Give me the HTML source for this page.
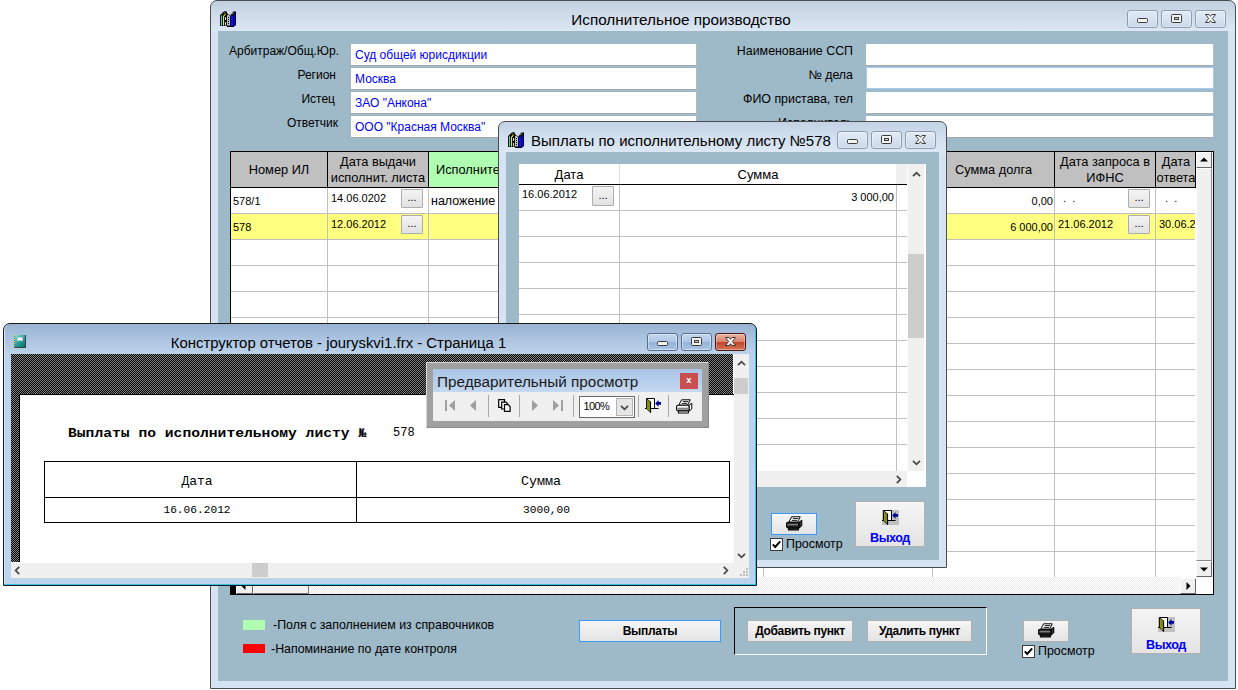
<!DOCTYPE html><html lang="ru"><head><meta charset="utf-8"><title>Исполнительное производство</title><style>
html,body{margin:0;padding:0}
body{width:1238px;height:690px;overflow:hidden;background:#fff;position:relative;font-family:"Liberation Sans",sans-serif;font-size:12px;color:#000}
div,span,svg{position:absolute;box-sizing:border-box;white-space:nowrap}
.win{border:1px solid #4a4c50;border-radius:7px 7px 0 0}
.cl{background:#9eb9c8}
.lbl{text-align:right;font-size:12px;line-height:14px}
.fld{background:#fff;border-bottom:1px solid #a9a9a9;border-right:1px solid #b4bcc0;color:#0000ff;font-size:12px;line-height:21px;padding-left:4px;padding-top:1px}
.hd{background:#c0c0c0;text-align:center;font-size:13px;line-height:15px}
.g{background:#c0c0c0}
.bk{background:#000}
.w{background:#fff}
.btn{background:linear-gradient(#f5f5f5,#e4e4e4);border:1px solid #b0b0b0;text-align:center}
.b{font-weight:bold}
.cb{background:#fff;border:1px solid #444}
.wb{border:1px solid #8d9db0;border-radius:3px;background:linear-gradient(#e3ecf7,#c9d8ea)}
.tt{font-size:16px;line-height:20px}
.t{font-size:11px;line-height:14px}
.t2{font-size:12.4px;line-height:14px}
.eb{background:linear-gradient(#f4f4f4,#e2e2e2);border:1px solid #adadad;border-radius:1px;font-size:11px;line-height:14px;text-align:center}
.sb{background:#f0f0f0}
</style></head><body>
<div class="win" style="left:210px;top:0px;width:1026px;height:689px;background:linear-gradient(#c1cfde 0,#cfdbe9 14px,#dce7f3 30px,#d6e3f2 31px)"></div>
<svg style="left:220px;top:11px" width="16" height="16" viewBox="0 0 16 16"><path d="M0 4.2L3.2 1 4.5.3h2L7 2l3 2.2V16H7v-1H0z" fill="#000"/><path d="M10 5l3.2-4.5H16V14l-2.5 2H10z" fill="#000"/><rect x="1" y="4.3" width="1.1" height="10.2" fill="#00f0f0"/><path d="M3 5.2L5.2 2.2l.8.6L4.1 5.6V14.5H3z" fill="#f8f000"/><rect x="5.1" y="6" width="1" height="3" fill="#e8e8e8"/><rect x="5.1" y="11" width="1" height="3.5" fill="#e8e8e8"/><path d="M7 4.5l1.3-1L10 5v9.5H7z" fill="#c0c0c0"/><path d="M8 6.5h1M8 8.5h1M8 10.5h1M8 12.5h1" stroke="#000" stroke-width="1"/><rect x="10.8" y="4.6" width="2.6" height="10.6" fill="#1010f8"/><path d="M14.1 3.2l1-1v11.6l-1 1z" fill="#1010f8"/><path d="M12.3 3.2l1.4-1.8" stroke="#e8d8c8" stroke-width=".8"/><path d="M3.6 2.4l1-1M7.6 2.8l.9.8" stroke="#e0e0e0" stroke-width=".7"/></svg>
<div class="tt" style="left:211px;top:10px;width:940px;height:21px;text-align:center;font-size:15.3px">Исполнительное производство</div>
<div class="wb" style="left:1127px;top:10px;width:31px;height:18px;box-shadow:inset 0 0 0 1px rgba(255,255,255,.35)">
<div style="left:9px;top:7px;width:11px;height:5px;border:1px solid #3c3c3c;border-radius:1.5px;background:#f2f2f0"></div>
</div>
<div class="wb" style="left:1161px;top:10px;width:31px;height:18px;box-shadow:inset 0 0 0 1px rgba(255,255,255,.35)">
<div style="left:9px;top:3px;width:11px;height:9px;border:1px solid #3c3c3c;border-radius:1.5px;background:#f2f2f0"></div>
<div style="left:12px;top:6px;width:5px;height:3px;border:1px solid #3c3c3c;background:#c8d6e6"></div>
</div>
<div class="wb" style="left:1195px;top:10px;width:31px;height:18px;box-shadow:inset 0 0 0 1px rgba(255,255,255,.35)">
<svg style="left:9px;top:3px" width="11" height="9" viewBox="0 0 11 9"><path d="M.5 .5H4L5.5 2.3 7 .5h3.500L7.400 4.500 10.500 8.500H7L5.500 6.700 4 8.500H.500L3.600 4.500z" fill="#f4f4f2" stroke="#3c3c3c" stroke-width="1" stroke-linejoin="round"/></svg>
</div>
<div class="cl" style="left:218px;top:31px;width:1010px;height:650px;"></div>
<div class="lbl" style="left:218px;top:44px;width:121px;height:16px;">Арбитраж/Общ.Юр.</div>
<div class="lbl" style="left:218px;top:68px;width:118px;height:16px;">Регион</div>
<div class="lbl" style="left:218px;top:92px;width:117px;height:16px;">Истец</div>
<div class="lbl" style="left:218px;top:116px;width:120px;height:16px;">Ответчик</div>
<div class="fld" style="left:351px;top:44px;width:346px;height:22px;">Суд общей юрисдикции</div>
<div class="fld" style="left:351px;top:68px;width:346px;height:22px;">Москва</div>
<div class="fld" style="left:351px;top:92px;width:346px;height:22px;">ЗАО "Анкона"</div>
<div class="fld" style="left:351px;top:116px;width:346px;height:22px;">ООО "Красная Москва"</div>
<div class="lbl" style="left:700px;top:44px;width:153px;height:16px;font-size:12.4px">Наименование ССП</div>
<div class="lbl" style="left:700px;top:68px;width:153px;height:16px;font-size:12.4px">№ дела</div>
<div class="lbl" style="left:700px;top:92px;width:153px;height:16px;font-size:12.4px">ФИО пристава, тел</div>
<div class="lbl" style="left:700px;top:116px;width:153px;height:16px;font-size:12.4px">Исполнитель</div>
<div class="fld" style="left:866px;top:44px;width:348px;height:22px;"></div>
<div class="fld" style="left:866px;top:68px;width:348px;height:22px;box-shadow:inset 0 0 0 1px #a6c9f0;border:0;height:22px;top:67px"></div>
<div class="fld" style="left:866px;top:92px;width:348px;height:22px;"></div>
<div class="fld" style="left:866px;top:116px;width:348px;height:22px;"></div>
<div class="bk" style="left:230px;top:151px;width:984px;height:444px;"></div>
<div class="w" style="left:231px;top:152px;width:982px;height:442px;"></div>
<div class="hd" style="left:231px;top:152px;width:964px;height:35px;"></div>
<div class="bk" style="left:231px;top:187px;width:965px;height:1px;"></div>
<div class="bk" style="left:1195px;top:152px;width:1px;height:36px;"></div>
<div class="" style="left:231px;top:214px;width:964px;height:25px;background:#ffff80"></div>
<div class="g" style="left:231px;top:213px;width:964px;height:1px;"></div>
<div class="g" style="left:231px;top:239px;width:964px;height:1px;"></div>
<div class="g" style="left:231px;top:265px;width:964px;height:1px;"></div>
<div class="g" style="left:231px;top:291px;width:964px;height:1px;"></div>
<div class="g" style="left:231px;top:317px;width:964px;height:1px;"></div>
<div class="g" style="left:231px;top:343px;width:964px;height:1px;"></div>
<div class="g" style="left:231px;top:369px;width:964px;height:1px;"></div>
<div class="g" style="left:231px;top:395px;width:964px;height:1px;"></div>
<div class="g" style="left:231px;top:421px;width:964px;height:1px;"></div>
<div class="g" style="left:231px;top:447px;width:964px;height:1px;"></div>
<div class="g" style="left:231px;top:473px;width:964px;height:1px;"></div>
<div class="g" style="left:231px;top:499px;width:964px;height:1px;"></div>
<div class="g" style="left:231px;top:525px;width:964px;height:1px;"></div>
<div class="g" style="left:231px;top:551px;width:964px;height:1px;"></div>
<div class="g" style="left:327px;top:188px;width:1px;height:389px;"></div>
<div class="bk" style="left:327px;top:152px;width:1px;height:36px;"></div>
<div class="g" style="left:428px;top:188px;width:1px;height:389px;"></div>
<div class="bk" style="left:428px;top:152px;width:1px;height:36px;"></div>
<div class="g" style="left:763px;top:188px;width:1px;height:389px;"></div>
<div class="bk" style="left:763px;top:152px;width:1px;height:36px;"></div>
<div class="g" style="left:932px;top:188px;width:1px;height:389px;"></div>
<div class="bk" style="left:932px;top:152px;width:1px;height:36px;"></div>
<div class="g" style="left:1054px;top:188px;width:1px;height:389px;"></div>
<div class="bk" style="left:1054px;top:152px;width:1px;height:36px;"></div>
<div class="g" style="left:1155px;top:188px;width:1px;height:389px;"></div>
<div class="bk" style="left:1155px;top:152px;width:1px;height:36px;"></div>
<div class="" style="left:428px;top:152px;width:335px;height:35px;background:#b0ffb0"></div>
<div class="bk" style="left:428px;top:152px;width:1px;height:36px;"></div>
<div class="" style="left:231px;top:162px;width:96px;height:16px;text-align:center;font-size:12.8px;line-height:16px">Номер ИЛ</div>
<div class="" style="left:328px;top:154px;width:100px;height:32px;text-align:center;font-size:12.8px;line-height:16px;white-space:normal">Дата выдачи<br>исполнит. листа</div>
<div class="" style="left:436px;top:162px;width:264px;height:16px;font-size:12.8px;line-height:16px">Исполнительный документ</div>
<div class="" style="left:933px;top:162px;width:121px;height:16px;text-align:center;font-size:12.8px;line-height:16px">Сумма долга</div>
<div class="" style="left:1055px;top:154px;width:100px;height:32px;text-align:center;font-size:12.8px;line-height:16px;white-space:normal">Дата запроса в<br>ИФНС</div>
<div class="" style="left:1156px;top:152px;width:39px;height:35px;overflow:hidden"></div>
<div class="" style="left:1156px;top:154px;width:40px;height:32px;text-align:center;font-size:12.8px;line-height:16px;white-space:normal;overflow:hidden">Дата<br>ответа</div>
<div class="t" style="left:233px;top:194px;width:87px;height:14px;">578/1</div>
<div class="t" style="left:233px;top:220px;width:87px;height:14px;">578</div>
<div class="t" style="left:331px;top:191px;width:69px;height:14px;">14.06.0202</div>
<div class="t" style="left:331px;top:217px;width:69px;height:14px;">12.06.2012</div>
<div class="eb" style="left:401px;top:189px;width:22px;height:19px;line-height:15px">...</div>
<div class="eb" style="left:401px;top:215px;width:22px;height:19px;line-height:15px">...</div>
<div class="" style="left:431px;top:193px;width:67px;height:16px;font-size:12.5px;line-height:16px">наложение</div>
<div class="" style="left:960px;top:193px;width:93px;height:16px;font-size:11px;line-height:16px;text-align:right">0,00</div>
<div class="" style="left:960px;top:219px;width:93px;height:16px;font-size:11px;line-height:16px;text-align:right">6 000,00</div>
<div class="t" style="left:1063px;top:191px;width:57px;height:14px;">.&nbsp;&nbsp;.</div>
<div class="t" style="left:1058px;top:217px;width:72px;height:14px;">21.06.2012</div>
<div class="eb" style="left:1128px;top:189px;width:22px;height:19px;line-height:15px">...</div>
<div class="eb" style="left:1128px;top:215px;width:22px;height:19px;line-height:15px">...</div>
<div class="t" style="left:1165px;top:191px;width:30px;height:14px;">.&nbsp;&nbsp;.</div>
<div class="t" style="left:1159px;top:217px;width:36px;height:14px;overflow:hidden">30.06.2012</div>
<div class="" style="left:1196px;top:152px;width:17px;height:425px;background:#f6f6f6"></div>
<div class="" style="left:1196px;top:152px;width:16px;height:16px;background:#f0f0f0;border:1px solid #fff;border-right-color:#666;border-bottom-color:#666"></div>
<svg style="left:1200px;top:157px" width="8" height="5"><path d="M0 4.5L4 .5 8 4.5z" fill="#000"/></svg>
<div class="" style="left:1196px;top:168px;width:16px;height:393px;background:#f0f0f0;border:1px solid #fff;border-right-color:#888;border-bottom-color:#888"></div>
<div class="" style="left:1196px;top:561px;width:16px;height:16px;background:#f0f0f0;border:1px solid #fff;border-right-color:#666;border-bottom-color:#666"></div>
<svg style="left:1200px;top:567px" width="8" height="5"><path d="M0 .5L4 4.5 8 .5z" fill="#000"/></svg>
<div class="" style="left:231px;top:577px;width:982px;height:17px;background:#fff repeating-conic-gradient(#ececec 0 25%,#fff 0 50%) 0 0/2px 2px"></div>
<div class="" style="left:236px;top:578px;width:17px;height:16px;background:#f0f0f0;border:1px solid #fff;border-right-color:#666;border-bottom-color:#666"></div>
<svg style="left:241px;top:582px" width="5" height="8"><path d="M4.5 0L.5 4 4.5 8z" fill="#000"/></svg>
<div class="" style="left:253px;top:578px;width:56px;height:16px;background:#f0f0f0;border:1px solid #fff;border-right-color:#777;border-bottom-color:#777"></div>
<div class="" style="left:1180px;top:578px;width:16px;height:16px;background:#f0f0f0;border:1px solid #fff;border-right-color:#666;border-bottom-color:#666"></div>
<svg style="left:1186px;top:582px" width="5" height="8"><path d="M.5 0L4.5 4 .5 8z" fill="#000"/></svg>
<div class="w" style="left:1196px;top:578px;width:17px;height:16px;"></div>
<div class="bk" style="left:231px;top:578px;width:5px;height:16px;"></div>
<div class="" style="left:243px;top:620px;width:22px;height:10px;background:#b0ffb0"></div>
<div class="" style="left:243px;top:644px;width:22px;height:9px;background:#ff0000"></div>
<div class="t2" style="left:273px;top:618px;width:247px;height:14px;">-Поля с заполнением из справочников</div>
<div class="t2" style="left:271px;top:642px;width:249px;height:14px;">-Напоминание по дате контроля</div>
<div class="btn b" style="left:579px;top:620px;width:142px;height:22px;border-color:#3c9aff;line-height:20px;letter-spacing:-.3px">Выплаты</div>
<div class="" style="left:734px;top:607px;width:253px;height:48px;border:1px solid #000;border-right-color:#fff;border-bottom-color:#fff"></div>
<div class="btn b" style="left:747px;top:620px;width:106px;height:22px;line-height:20px;letter-spacing:-.35px">Добавить пункт</div>
<div class="btn b" style="left:867px;top:620px;width:105px;height:22px;line-height:20px;letter-spacing:-.35px">Удалить пункт</div>
<div class="btn" style="left:1023px;top:620px;width:46px;height:22px;"></div>
<svg style="left:1038px;top:623px" width="17" height="15" viewBox="0 0 17 15"><path d="M13 6.2l2.8-2v5.6L13 12.2z" fill="#303030" stroke="#000" stroke-width="1"/><path d="M5.6 .8h8.6L11.6 6.2H2.8z" fill="#fff" stroke="#000" stroke-width="1"/><path d="M6.8 2.6h5.4M5.8 4.4h5.4" stroke="#000" stroke-width=".9"/><rect x=".6" y="6.2" width="12.4" height="5.6" rx="1.4" fill="#303030" stroke="#000" stroke-width="1.1"/><rect x="1.6" y="8.2" width="10.4" height="1.5" fill="#909090"/><path d="M1.6 10h10.4" stroke="#000" stroke-width=".8"/><rect x="2.4" y="12" width="10" height="2" fill="#303030" stroke="#000" stroke-width="1"/></svg>
<svg style="left:1022px;top:645px" width="13" height="13" viewBox="0 0 13 13"><rect x=".5" y=".5" width="12" height="12" fill="#fff" stroke="#3c3c3c"/><path d="M2.8 6.4l2.4 2.6 5-5.6" fill="none" stroke="#000" stroke-width="1.9"/></svg>
<div class="t2" style="left:1038px;top:644px;width:62px;height:14px;">Просмотр</div>
<div class="btn" style="left:1131px;top:608px;width:70px;height:46px;"></div>
<svg style="left:1158px;top:617px" width="17" height="16" viewBox="0 0 17 16"><rect x="0" y="0" width="17" height="15" fill="#c0c0c0"/><path d="M1.5 10.5V.5h8v10" fill="#fff" stroke="#000" stroke-width="1"/><path d="M0 10.5h13.5" stroke="#000" stroke-width="1"/><path d="M1.5 .8L5.3 3.6 5.6 14.6 1.5 10.8z" fill="#8c8c14" stroke="#000" stroke-width=".7"/><path d="M5.6 3.6V14.6" stroke="#000" stroke-width="1"/><path d="M10.2 5.4L13.5 2v2.1H16v2.7h-2.5v2z" fill="#000098"/></svg>
<div class="b" style="left:1131px;top:637px;width:70px;height:16px;text-align:center;color:#0000ff;font-size:12.6px;letter-spacing:-.45px;line-height:16px">Выход</div>
<div class="win" style="left:498px;top:121px;width:449px;height:447px;background:linear-gradient(#c3d3e4 0,#d0deed 14px,#dde8f5 31px,#d6e3f2 32px);box-shadow:0 0 0 0 #000"></div>
<svg style="left:508px;top:132px" width="16" height="16" viewBox="0 0 16 16"><path d="M0 4.2L3.2 1 4.5.3h2L7 2l3 2.2V16H7v-1H0z" fill="#000"/><path d="M10 5l3.2-4.5H16V14l-2.5 2H10z" fill="#000"/><rect x="1" y="4.3" width="1.1" height="10.2" fill="#00f0f0"/><path d="M3 5.2L5.2 2.2l.8.6L4.1 5.6V14.5H3z" fill="#f8f000"/><rect x="5.1" y="6" width="1" height="3" fill="#e8e8e8"/><rect x="5.1" y="11" width="1" height="3.5" fill="#e8e8e8"/><path d="M7 4.5l1.3-1L10 5v9.5H7z" fill="#c0c0c0"/><path d="M8 6.5h1M8 8.5h1M8 10.5h1M8 12.5h1" stroke="#000" stroke-width="1"/><rect x="10.8" y="4.6" width="2.6" height="10.6" fill="#1010f8"/><path d="M14.1 3.2l1-1v11.6l-1 1z" fill="#1010f8"/><path d="M12.3 3.2l1.4-1.8" stroke="#e8d8c8" stroke-width=".8"/><path d="M3.6 2.4l1-1M7.6 2.8l.9.8" stroke="#e0e0e0" stroke-width=".7"/></svg>
<div class="tt" style="left:531px;top:131px;width:305px;height:20px;font-size:15px">Выплаты по исполнительному листу №578</div>
<div class="wb" style="left:837px;top:131px;width:31px;height:18px;box-shadow:inset 0 0 0 1px rgba(255,255,255,.35)">
<div style="left:9px;top:7px;width:11px;height:5px;border:1px solid #3c3c3c;border-radius:1.5px;background:#f2f2f0"></div>
</div>
<div class="wb" style="left:871px;top:131px;width:31px;height:18px;box-shadow:inset 0 0 0 1px rgba(255,255,255,.35)">
<div style="left:9px;top:3px;width:11px;height:9px;border:1px solid #3c3c3c;border-radius:1.5px;background:#f2f2f0"></div>
<div style="left:12px;top:6px;width:5px;height:3px;border:1px solid #3c3c3c;background:#c8d6e6"></div>
</div>
<div class="wb" style="left:905px;top:131px;width:31px;height:18px;box-shadow:inset 0 0 0 1px rgba(255,255,255,.35)">
<svg style="left:9px;top:3px" width="11" height="9" viewBox="0 0 11 9"><path d="M.5 .5H4L5.5 2.3 7 .5h3.500L7.400 4.500 10.500 8.500H7L5.500 6.700 4 8.500H.500L3.600 4.500z" fill="#f4f4f2" stroke="#3c3c3c" stroke-width="1" stroke-linejoin="round"/></svg>
</div>
<div class="cl" style="left:506px;top:152px;width:433px;height:408px;"></div>
<div class="w" style="left:519px;top:164px;width:407px;height:323px;"></div>
<div class="bk" style="left:519px;top:184px;width:388px;height:1px;"></div>
<div class="sb" style="left:896px;top:164px;width:11px;height:20px;"></div>
<div class="sb" style="left:908px;top:164px;width:16px;height:307px;"></div>
<div class="sb" style="left:519px;top:471px;width:388px;height:16px;"></div>
<div class="" style="left:519px;top:164px;width:100px;height:20px;text-align:center;font-size:13px;line-height:21px">Дата</div>
<div class="" style="left:620px;top:164px;width:276px;height:20px;text-align:center;font-size:13px;line-height:21px">Сумма</div>
<div class="g" style="left:519px;top:210px;width:388px;height:1px;"></div>
<div class="g" style="left:519px;top:236px;width:388px;height:1px;"></div>
<div class="g" style="left:519px;top:262px;width:388px;height:1px;"></div>
<div class="g" style="left:519px;top:288px;width:388px;height:1px;"></div>
<div class="g" style="left:519px;top:314px;width:388px;height:1px;"></div>
<div class="g" style="left:519px;top:340px;width:388px;height:1px;"></div>
<div class="g" style="left:519px;top:366px;width:388px;height:1px;"></div>
<div class="g" style="left:519px;top:392px;width:388px;height:1px;"></div>
<div class="g" style="left:519px;top:418px;width:388px;height:1px;"></div>
<div class="g" style="left:519px;top:444px;width:388px;height:1px;"></div>
<div class="g" style="left:619px;top:185px;width:1px;height:286px;"></div>
<div class="g" style="left:896px;top:185px;width:1px;height:286px;"></div>
<div class="" style="left:619px;top:164px;width:1px;height:20px;background:#e0e0e0"></div>
<div class="t" style="left:522px;top:187px;width:68px;height:14px;">16.06.2012</div>
<div class="eb" style="left:592px;top:186px;width:22px;height:20px;line-height:16px">...</div>
<div class="t" style="left:800px;top:189px;width:94px;height:16px;text-align:right;line-height:16px">3 000,00</div>
<div class="" style="left:908px;top:254px;width:16px;height:84px;background:#cdcdcd"></div>
<svg style="left:911.5px;top:171px" width="9" height="6" viewBox="-.6 -.4 10.2 6.8"><path d="M.5 5.5L4.5 1.5 8.5 5.5" fill="none" stroke="#484848" stroke-width="2"/></svg>
<svg style="left:911.5px;top:460px" width="9" height="6" viewBox="-.6 -.4 10.2 6.8"><path d="M.5 .5L4.5 4.5 8.5 .5" fill="none" stroke="#484848" stroke-width="2"/></svg>
<svg style="left:896px;top:474.5px" width="6" height="9" viewBox="-.4 -.6 6.8 10.2"><path d="M.5 .5L4.5 4.5 .5 8.5" fill="none" stroke="#484848" stroke-width="2"/></svg>
<div class="btn" style="left:771px;top:513px;width:46px;height:22px;border-color:#3c9aff"></div>
<svg style="left:786px;top:516px" width="17" height="15" viewBox="0 0 17 15"><path d="M13 6.2l2.8-2v5.6L13 12.2z" fill="#303030" stroke="#000" stroke-width="1"/><path d="M5.6 .8h8.6L11.6 6.2H2.8z" fill="#fff" stroke="#000" stroke-width="1"/><path d="M6.8 2.6h5.4M5.8 4.4h5.4" stroke="#000" stroke-width=".9"/><rect x=".6" y="6.2" width="12.4" height="5.6" rx="1.4" fill="#303030" stroke="#000" stroke-width="1.1"/><rect x="1.6" y="8.2" width="10.4" height="1.5" fill="#909090"/><path d="M1.6 10h10.4" stroke="#000" stroke-width=".8"/><rect x="2.4" y="12" width="10" height="2" fill="#303030" stroke="#000" stroke-width="1"/></svg>
<svg style="left:770px;top:538px" width="13" height="13" viewBox="0 0 13 13"><rect x=".5" y=".5" width="12" height="12" fill="#fff" stroke="#3c3c3c"/><path d="M2.8 6.4l2.4 2.6 5-5.6" fill="none" stroke="#000" stroke-width="1.9"/></svg>
<div class="t2" style="left:786px;top:537px;width:64px;height:14px;">Просмотр</div>
<div class="btn" style="left:855px;top:501px;width:70px;height:46px;"></div>
<svg style="left:882px;top:510px" width="17" height="16" viewBox="0 0 17 16"><rect x="0" y="0" width="17" height="15" fill="#c0c0c0"/><path d="M1.5 10.5V.5h8v10" fill="#fff" stroke="#000" stroke-width="1"/><path d="M0 10.5h13.5" stroke="#000" stroke-width="1"/><path d="M1.5 .8L5.3 3.6 5.6 14.6 1.5 10.8z" fill="#8c8c14" stroke="#000" stroke-width=".7"/><path d="M5.6 3.6V14.6" stroke="#000" stroke-width="1"/><path d="M10.2 5.4L13.5 2v2.1H16v2.7h-2.5v2z" fill="#000098"/></svg>
<div class="b" style="left:855px;top:530px;width:70px;height:16px;text-align:center;color:#0000ff;font-size:12.6px;letter-spacing:-.45px;line-height:16px">Выход</div>
<div class="win" style="left:3px;top:323px;width:754px;height:263px;background:linear-gradient(#98b3d1 0,#adc5e1 16px,#bcd2ea 30px,#bbd3ed 31px);border-color:#1a1a1a;box-shadow:inset -1px -1px 0 #35c4e8,inset 1px 0 0 #d5e6f7"></div>
<div class="" style="left:14px;top:335px;width:12px;height:13px;background:linear-gradient(135deg,#8fe0d8,#2a9a96 55%,#0e6a6a);border-right:1px solid #2a4a4a;border-bottom:1px solid #2a4a4a;border-left:1px dotted #e8e000"></div>
<div class="" style="left:17px;top:337px;width:6px;height:4px;background:#f4f8f8;border:1px solid #b0d0d0"></div>
<div class="tt" style="left:3px;top:333px;width:671px;height:20px;text-align:center;font-size:14.9px">Конструктор отчетов - jouryskvi1.frx - Страница 1</div>
<div class="wb" style="left:647px;top:333px;width:31px;height:18px;background:linear-gradient(#c3d6ee,#afc8e6 48%,#93b3d8 52%,#a9c4e4);border-color:#566f90;box-shadow:inset 0 0 0 1px rgba(255,255,255,.45)">
<div style="left:9px;top:7px;width:11px;height:5px;border:1px solid #3c3c3c;border-radius:1.5px;background:#f2f2f0"></div>
</div>
<div class="wb" style="left:681px;top:333px;width:31px;height:18px;background:linear-gradient(#c3d6ee,#afc8e6 48%,#93b3d8 52%,#a9c4e4);border-color:#566f90;box-shadow:inset 0 0 0 1px rgba(255,255,255,.45)">
<div style="left:9px;top:3px;width:11px;height:9px;border:1px solid #3c3c3c;border-radius:1.5px;background:#f2f2f0"></div>
<div style="left:12px;top:6px;width:5px;height:3px;border:1px solid #3c3c3c;background:#c8d6e6"></div>
</div>
<div class="wb" style="left:715px;top:333px;width:31px;height:18px;background:linear-gradient(#e9b3a4,#d9836b 48%,#c3432a 52%,#d5765a);border-color:#4e1812;box-shadow:inset 0 0 0 1px rgba(255,255,255,.35)">
<svg style="left:9px;top:3px" width="11" height="9" viewBox="0 0 11 9"><path d="M.5 .5H4L5.5 2.3 7 .5h3.500L7.400 4.500 10.500 8.500H7L5.500 6.700 4 8.500H.500L3.600 4.500z" fill="#f4f4f2" stroke="#3c3c3c" stroke-width="1" stroke-linejoin="round"/></svg>
</div>
<div class="" style="left:11px;top:354px;width:738px;height:224px;background:#fff"></div>
<div class="" style="left:11px;top:354px;width:722px;height:208px;background:#000 repeating-conic-gradient(#808080 0 25%,#000 0 50%) 0 0/2px 2px"></div>
<div class="bk" style="left:19px;top:394px;width:715px;height:168px;"></div>
<div class="w" style="left:20px;top:395px;width:714px;height:167px;"></div>
<div class="b" style="left:68px;top:425px;width:332px;height:16px;font-family:'Liberation Mono',monospace;font-size:13px;line-height:16px;transform:scaleX(1.128);transform-origin:0 0">Выплаты по исполнительному листу <span style="position:static;font-family:'DejaVu Sans Mono',monospace;font-weight:bold;font-size:12px">№</span></div>
<div class="" style="left:393px;top:425px;width:37px;height:16px;font-family:'Liberation Mono',monospace;font-size:12px;line-height:16px">578</div>
<div class="" style="left:44px;top:461px;width:686px;height:62px;border:1px solid #000"></div>
<div class="bk" style="left:44px;top:497px;width:686px;height:1px;"></div>
<div class="bk" style="left:356px;top:461px;width:1px;height:62px;"></div>
<div class="" style="left:41px;top:474px;width:312px;height:16px;font-family:'Liberation Mono',monospace;font-size:13px;line-height:16px;text-align:center">Дата</div>
<div class="" style="left:357px;top:474px;width:368px;height:16px;font-family:'Liberation Mono',monospace;font-size:13.4px;line-height:16px;text-align:center">Сумма</div>
<div class="" style="left:41px;top:502px;width:312px;height:16px;font-family:'Liberation Mono',monospace;font-size:11.2px;line-height:16px;text-align:center">16.06.2012</div>
<div class="" style="left:364px;top:502px;width:365px;height:16px;font-family:'Liberation Mono',monospace;font-size:11.2px;line-height:16px;text-align:center">3000,00</div>
<div class="sb" style="left:734px;top:354px;width:15px;height:209px;"></div>
<div class="" style="left:734px;top:378px;width:14px;height:16px;background:#cdcdcd"></div>
<div class="sb" style="left:11px;top:563px;width:738px;height:15px;"></div>
<div class="" style="left:252px;top:563px;width:16px;height:14px;background:#cdcdcd"></div>
<svg style="left:739px;top:567px" width="10" height="10" viewBox="0 0 10 10"><path d="M7 1h2v2H7zM7 4h2v2H7zM7 7h2v2H7zM4 4h2v2H4zM4 7h2v2H4zM1 7h2v2H1z" fill="#bdbdbd"/></svg>
<svg style="left:736.5px;top:359.5px" width="9" height="6" viewBox="-.6 -.4 10.2 6.8"><path d="M.5 5.5L4.5 1.5 8.5 5.5" fill="none" stroke="#484848" stroke-width="2"/></svg>
<svg style="left:736.5px;top:552.5px" width="9" height="6" viewBox="-.6 -.4 10.2 6.8"><path d="M.5 .5L4.5 4.5 8.5 .5" fill="none" stroke="#484848" stroke-width="2"/></svg>
<svg style="left:723px;top:565.5px" width="6" height="9" viewBox="-.4 -.6 6.8 10.2"><path d="M.5 .5L4.5 4.5 .5 8.5" fill="none" stroke="#484848" stroke-width="2"/></svg>
<svg style="left:14px;top:565.5px" width="6" height="9" viewBox="-.4 -.6 6.8 10.2"><path d="M5.5 .5L1.5 4.5 5.5 8.5" fill="none" stroke="#484848" stroke-width="2"/></svg>
<div class="" style="left:426px;top:362px;width:283px;height:66px;background:#a0a0a0;border:1px solid #8a8a8a;border-left-color:#d8d8d8;border-top-color:#d8d8d8"></div>
<div class="" style="left:433px;top:369px;width:269px;height:52px;background:#f0f0f0"></div>
<div class="" style="left:433px;top:369px;width:269px;height:23px;background:linear-gradient(#a9c4e6,#c4d8ef)"></div>
<div class="" style="left:437px;top:372px;width:243px;height:20px;font-size:15.3px;line-height:20px;color:#1a1a1a">Предварительный просмотр</div>
<div class="" style="left:680px;top:373px;width:18px;height:16px;background:#c74f50;color:#fff;font-size:9.5px;line-height:14px;text-align:center;font-weight:bold">x</div>
<div class="" style="left:579px;top:396px;width:56px;height:22px;background:#fff;border:1px solid #6a6a6a"></div>
<div class="" style="left:583.5px;top:398px;width:28.5px;height:16px;font-size:11px;letter-spacing:-.6px;line-height:16px">100%</div>
<div class="" style="left:616px;top:398px;width:17px;height:18px;background:#e6e6e6;border:1px solid #b4b4b4"></div>
<svg style="left:620px;top:405px" width="9" height="6" viewBox="-.6 -.4 10.2 6.8"><path d="M.5 .5L4.5 4.5 8.5 .5" fill="none" stroke="#484848" stroke-width="2"/></svg>
<div class="" style="left:445px;top:400px;width:2px;height:11px;background:#a0a0a0"></div>
<svg style="left:449px;top:400px" width="7" height="11" viewBox="0 0 7 11"><path d="M0 5.5L6 0v11z" fill="#a0a0a0"/></svg>
<svg style="left:470px;top:400px" width="7" height="11" viewBox="0 0 7 11"><path d="M0 5.5L6 0v11z" fill="#a0a0a0"/></svg>
<svg style="left:532px;top:400px" width="7" height="11" viewBox="0 0 7 11"><path d="M6 5.5L0 0v11z" fill="#a0a0a0"/></svg>
<svg style="left:553px;top:400px" width="7" height="11" viewBox="0 0 7 11"><path d="M6 5.5L0 0v11z" fill="#a0a0a0"/></svg>
<div class="" style="left:561px;top:400px;width:2px;height:11px;background:#a0a0a0"></div>
<svg style="left:498px;top:399px" width="13" height="13" viewBox="0 0 13 13"><path d="M.7 .7h5.8v7.6H.7z" fill="#fff" stroke="#000" stroke-width="1.2"/><path d="M3.7 3.2h4.3l1.6 1.6v5.2H3.7z" fill="#fff" stroke="#000" stroke-width="1.2"/><path d="M6.5 5.6h3.6l2 2v4.7H6.5z" fill="#fff" stroke="#000" stroke-width="1.2"/></svg>
<svg style="left:645px;top:398px" width="17" height="16" viewBox="0 0 17 16"><path d="M1.5 10.5V.5h8v10" fill="#fff" stroke="#000" stroke-width="1"/><path d="M0 10.5h13.5" stroke="#000" stroke-width="1"/><path d="M1.5 .8L5.3 3.6 5.6 14.6 1.5 10.8z" fill="#8c8c14" stroke="#000" stroke-width=".7"/><path d="M5.6 3.6V14.6" stroke="#000" stroke-width="1"/><path d="M10.2 5.4L13.5 2v2.1H16v2.7h-2.5v2z" fill="#000098"/></svg>
<svg style="left:676px;top:398.5px" width="17" height="15" viewBox="0 0 17 15"><path d="M13 6.2l2.8-2v5.6L13 12.2z" fill="#fff" stroke="#000" stroke-width="1"/><path d="M5.6 .8h8.6L11.6 6.2H2.8z" fill="#fff" stroke="#000" stroke-width="1"/><path d="M6.8 2.6h5.4M5.8 4.4h5.4" stroke="#000" stroke-width=".9"/><rect x=".6" y="6.2" width="12.4" height="5.6" rx="1.4" fill="#fff" stroke="#000" stroke-width="1.1"/><rect x="1.6" y="8.2" width="10.4" height="1.5" fill="#c8c8c8"/><path d="M1.6 10h10.4" stroke="#000" stroke-width=".8"/><rect x="2.4" y="12" width="10" height="2" fill="#fff" stroke="#000" stroke-width="1"/></svg>
<div class="" style="left:488px;top:395px;width:1px;height:22px;background:#a8a8a8"></div>
<div class="" style="left:519px;top:395px;width:1px;height:22px;background:#a8a8a8"></div>
<div class="" style="left:573px;top:395px;width:1px;height:22px;background:#a8a8a8"></div>
<div class="" style="left:638px;top:395px;width:1px;height:22px;background:#a8a8a8"></div>
<div class="" style="left:668px;top:395px;width:1px;height:22px;background:#a8a8a8"></div>
</body></html>
